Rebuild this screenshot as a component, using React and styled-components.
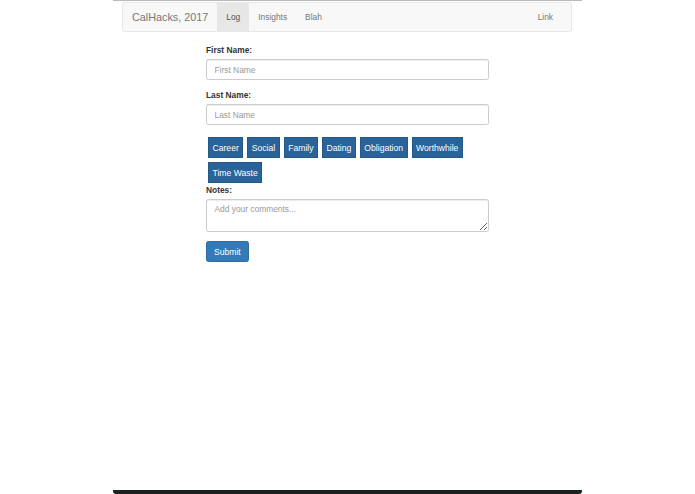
import React, { useState } from "react";
import styled, { createGlobalStyle } from "styled-components";

const GlobalStyle = createGlobalStyle`
  html, body {
    margin: 0;
    padding: 0;
    background: #fff;
  }
  body {
    font-family: "Liberation Sans", Arial, sans-serif;
    font-size: 8.4px;
    color: #333;
  }
  * {
    box-sizing: border-box;
  }
`;

const Page = styled.div`
  width: 469px;
  height: 494px;
  margin: 0 auto;
  display: flex;
  flex-direction: column;
  border-top: 1px solid #b9b9b9;
  border-bottom: 4px solid #1c2220;
  border-radius: 0 0 3px 3px;
  background: #fff;
`;

const Navbar = styled.nav`
  margin: 1px 10px 12px 9px;
  height: 30px;
  display: flex;
  align-items: stretch;
  background: #f8f8f8;
  border: 1px solid #e7e7e7;
  border-radius: 2.4px;
`;

const Brand = styled.a`
  display: flex;
  align-items: center;
  padding: 0 9px 0 9px;
  font-size: 10.8px;
  color: #777;
  text-decoration: none;
`;

const NavLinks = styled.div`
  display: flex;
  align-items: stretch;
  margin-left: ${(p) => (p.right ? "auto" : "0")};
  margin-right: ${(p) => (p.right ? "9px" : "0")};
`;

const NavLink = styled.a`
  display: flex;
  align-items: center;
  padding: 0 9px;
  font-size: 8.4px;
  color: ${(p) => (p.active ? "#555" : "#777")};
  background: ${(p) => (p.active ? "#e7e7e7" : "transparent")};
  text-decoration: none;
  cursor: pointer;
`;

const Form = styled.form`
  width: 283px;
  margin: 0 auto;
  display: flex;
  flex-direction: column;
`;

const Group = styled.div`
  display: flex;
  flex-direction: column;
  margin-bottom: ${(p) => p.gap || 9}px;
`;

const Label = styled.label`
  font-weight: bold;
  font-size: 8.4px;
  line-height: 12px;
  margin-bottom: 3px;
  color: #333;
`;

const Input = styled.input`
  height: 21px;
  padding: 0 7.5px;
  font-family: inherit;
  font-size: 8.4px;
  color: #555;
  border: 1px solid #ccc;
  border-radius: 2.4px;
  box-shadow: inset 0 1px 1px rgba(0, 0, 0, 0.075);
  outline: none;
  &::placeholder {
    color: #999;
  }
`;

const TextArea = styled.textarea`
  height: 33px;
  padding: 4px 7.5px;
  font-family: inherit;
  font-size: 8.4px;
  color: #555;
  border: 1px solid #ccc;
  border-radius: 2.4px;
  box-shadow: inset 0 1px 1px rgba(0, 0, 0, 0.075);
  outline: none;
  resize: vertical;
  &::placeholder {
    color: #999;
  }
`;

const Tags = styled.div`
  display: flex;
  flex-wrap: wrap;
  gap: 4px 4px;
  padding-left: 2px;
  margin-top: 3px;
  margin-bottom: 1px;
`;

const Tag = styled.button`
  height: 21px;
  padding: 0 3.5px;
  font-family: inherit;
  font-size: 8.6px;
  color: #fff;
  background: ${(p) => (p.selected ? "#1b4a70" : "#2a639a")};
  border: 1px solid #245885;
  border-radius: 0;
  cursor: pointer;
`;

const Submit = styled.button`
  align-self: flex-start;
  height: 21px;
  padding: 0 7px;
  font-family: inherit;
  font-size: 8.6px;
  color: #fff;
  background: #337ab7;
  border: 1px solid #2e6da4;
  border-radius: 2.4px;
  cursor: pointer;
`;

const categories = [
  "Career",
  "Social",
  "Family",
  "Dating",
  "Obligation",
  "Worthwhile",
  "Time Waste",
];

const App = () => {
  const [selected, setSelected] = useState([]);
  const toggle = (c) => {
    setSelected((s) => (s.includes(c) ? s.filter((x) => x !== c) : [...s, c]));
  };

  return (
    <>
      <GlobalStyle />
      <Page>
        <Navbar>
          <Brand href="#">CalHacks, 2017</Brand>
          <NavLinks>
            <NavLink active>Log</NavLink>
            <NavLink>Insights</NavLink>
            <NavLink>Blah</NavLink>
          </NavLinks>
          <NavLinks right>
            <NavLink>Link</NavLink>
          </NavLinks>
        </Navbar>
        <Form onSubmit={(e) => e.preventDefault()}>
          <Group>
            <Label htmlFor="first">First Name:</Label>
            <Input id="first" placeholder="First Name" />
          </Group>
          <Group>
            <Label htmlFor="last">Last Name:</Label>
            <Input id="last" placeholder="Last Name" />
          </Group>
          <Tags>
            {categories.map((c) => (
              <Tag
                type="button"
                key={c}
                selected={selected.includes(c)}
                onClick={() => toggle(c)}
              >
                {c}
              </Tag>
            ))}
          </Tags>
          <Group>
            <Label htmlFor="notes">Notes:</Label>
            <TextArea id="notes" placeholder="Add your comments..." />
          </Group>
          <Submit type="submit">Submit</Submit>
        </Form>
      </Page>
    </>
  );
};

export default App;
